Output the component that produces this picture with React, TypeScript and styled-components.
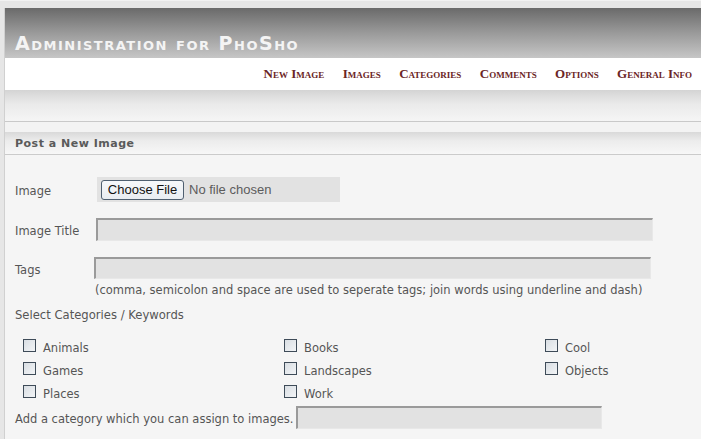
import React from "react";
import styled, { createGlobalStyle } from "styled-components";

const GlobalStyle = createGlobalStyle`
  html, body {
    margin: 0;
    padding: 0;
    background: #e6e6e6;
    overflow: hidden;
  }
  body {
    font-family: "DejaVu Sans", Verdana, sans-serif;
  }
`;

const Page = styled.div`
  padding: 7px 0 0 4px;
  border-top: 1px solid #f2f2f2;
  box-sizing: border-box;
  width: 701px;
`;

const Frame = styled.div`
  border-left: 1px solid #d0d0d0;
  background: #f5f5f5;
  min-height: 440px;
`;

const Header = styled.header`
  height: 50px;
  background: linear-gradient(to bottom, #6a6a6a 0%, #9a9a9a 50%, #c6c6c6 100%);
  display: flex;
  align-items: flex-end;
  padding-left: 10px;
`;

const Title = styled.h1`
  margin: 0 0 4px 0;
  font-family: "DejaVu Sans", Verdana, sans-serif;
  font-weight: bold;
  font-variant: small-caps;
  font-size: 19px;
  letter-spacing: 1.5px;
  color: #f4f4f4;
  line-height: 22px;
`;

const Nav = styled.nav`
  height: 32px;
  background: #ffffff;
  display: flex;
  justify-content: flex-end;
  align-items: center;
  gap: 18.4px;
  padding-right: 9px;
`;

const NavLink = styled.a`
  font-family: "Liberation Serif", "Times New Roman", serif;
  font-weight: bold;
  font-variant: small-caps;
  font-size: 13px;
  color: #6b2525;
  text-decoration: none;
`;

const Band = styled.div`
  height: 31px;
  background: linear-gradient(to bottom, #d4d4d4 0%, #eaeaea 45%, #f5f5f5 100%);
  border-bottom: 1px solid #c9c9c9;
`;

const Spacer = styled.div`
  height: 10px;
  background: #f3f3f3;
`;

const SectionHead = styled.h2`
  margin: 0;
  height: 22px;
  line-height: 23px;
  padding-left: 10px;
  background: linear-gradient(to bottom, #d9d9d9 0%, #ececec 40%, #f7f7f7 100%);
  border-bottom: 1px solid #cbcbcb;
  font-family: "DejaVu Sans", Verdana, sans-serif;
  font-size: 11px;
  font-weight: bold;
  color: #5a5a5a;
  letter-spacing: 0.5px;
`;

const Form = styled.form`
  padding: 22px 0 0 10px;
  color: #555555;
  font-size: 11.5px;
`;

const Row = styled.div<{ $top?: number }>`
  display: flex;
  align-items: center;
  margin-top: ${(p) => p.$top ?? 0}px;
`;

const Label = styled.label<{ $w: number }>`
  width: ${(p) => p.$w}px;
  flex-shrink: 0;
  padding-top: 3px;
  font-size: 11.5px;
  color: #555555;
`;

const FileBox = styled.div`
  width: 243px;
  height: 25px;
  background: #e2e2e2;
  display: flex;
  align-items: center;
  padding-left: 4px;
  box-sizing: border-box;
  gap: 5px;
`;

const FileButton = styled.span`
  display: inline-flex;
  align-items: center;
  justify-content: center;
  height: 20px;
  width: 83px;
  box-sizing: border-box;
  border: 1px solid #4f5f70;
  border-radius: 3px;
  background: linear-gradient(to bottom, #f6f8fa 0%, #e9edf1 100%);
  font-family: "Liberation Sans", Arial, sans-serif;
  font-size: 13px;
  color: #111111;
`;

const FileName = styled.span`
  font-family: "Liberation Sans", Arial, sans-serif;
  font-size: 13px;
  color: #5c5c5c;
  margin-top: -1px;
`;

const TextInput = styled.input<{ $w: number; $h: number }>`
  width: ${(p) => p.$w}px;
  height: ${(p) => p.$h}px;
  box-sizing: border-box;
  background: #e2e2e2;
  border: 0;
  border-top: 2px solid #9a9a9a;
  border-left: 2px solid #9a9a9a;
  border-right: 1px solid #e8e8e8;
  border-bottom: 1px solid #e8e8e8;
  padding: 0 4px;
  outline: none;
`;

const Hint = styled.div`
  margin: 4px 0 0 80px;
  font-size: 11.5px;
  color: #555555;
`;

const Heading = styled.div`
  margin-top: 11px;
  font-size: 11.6px;
  color: #555555;
`;

const CatGrid = styled.div`
  display: grid;
  grid-template-columns: 261px 261px auto;
  grid-auto-rows: 14px;
  row-gap: 9px;
  margin: 19px 0 0 8px;
`;

const CatItem = styled.label`
  display: flex;
  align-items: center;
  gap: 7px;
  height: 14px;
  line-height: 14px;
  font-size: 11.5px;
  color: #555555;
`;

const Box = styled.span`
  width: 13px;
  height: 13px;
  box-sizing: border-box;
  border: 1px solid #3e4b58;
  background: linear-gradient(135deg, #d9dee3 0%, #f2f4f6 100%);
  margin-top: -5px;
`;

const categories = [
  "Animals", "Books", "Cool",
  "Games", "Landscapes", "Objects",
  "Places", "Work", "",
];

const navItems = ["New Image", "Images", "Categories", "Comments", "Options", "General Info"];

export default function App() {
  return (
    <>
      <GlobalStyle />
      <Page>
        <Frame>
          <Header>
            <Title>Administration for PhoSho</Title>
          </Header>
          <Nav>
            {navItems.map((n) => (
              <NavLink key={n} href="#">{n}</NavLink>
            ))}
          </Nav>
          <Band />
          <Spacer />
          <SectionHead>Post a New Image</SectionHead>
          <Form>
            <Row>
              <Label $w={82}>Image</Label>
              <FileBox>
                <FileButton>Choose File</FileButton>
                <FileName>No file chosen</FileName>
              </FileBox>
            </Row>
            <Row $top={16}>
              <Label $w={81}>Image Title</Label>
              <TextInput $w={557} $h={23} />
            </Row>
            <Row $top={16}>
              <Label $w={79}>Tags</Label>
              <TextInput $w={557} $h={22} />
            </Row>
            <Hint>(comma, semicolon and space are used to seperate tags; join words using underline and dash)</Hint>
            <Heading>Select Categories / Keywords</Heading>
            <CatGrid>
              {categories.map((c, i) =>
                c ? (
                  <CatItem key={i}>
                    <Box />
                    {c}
                  </CatItem>
                ) : (
                  <span key={i} />
                )
              )}
            </CatGrid>
            <Row $top={5}>
              <Label $w={281}>Add a category which you can assign to images.</Label>
              <TextInput $w={306} $h={23} />
            </Row>
          </Form>
        </Frame>
      </Page>
    </>
  );
}
